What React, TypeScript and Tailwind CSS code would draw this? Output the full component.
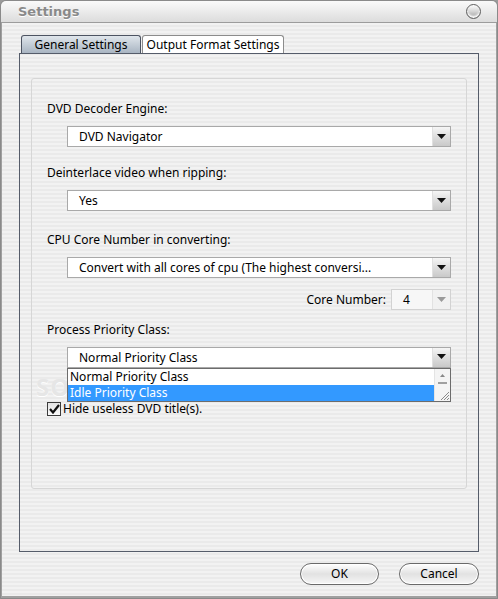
import React from 'react';

const stripes =
  'bg-[repeating-linear-gradient(180deg,#f2f2f2_0px,#f2f2f2_2px,#eaeaea_2px,#eaeaea_4px)]';

function Arrow({ dim = false }: { dim?: boolean }) {
  return (
    <svg width="9" height="5" viewBox="0 0 9 5">
      <path d="M0 0h9L4.5 5z" fill={dim ? '#9a9a9a' : '#111'} />
    </svg>
  );
}

function Combo({ value, open = false }: { value: string; open?: boolean }) {
  return (
    <div className="ml-[20px] mr-[15px] flex h-[21px] items-stretch border border-[#a9a9a9] bg-white">
      <div className="flex flex-1 items-center pl-[11px] text-[12px] text-black whitespace-nowrap overflow-hidden">
        {value}
      </div>
      <div
        className={`flex w-[18px] items-center justify-center border-l border-[#e0e0e0] bg-gradient-to-b from-[#f6f6f6] via-[#dedede] to-[#c9c9c9] ${open ? 'pb-[2px]' : ''}`}
      >
        <Arrow />
      </div>
    </div>
  );
}

function Label({ children, className = '' }: { children: React.ReactNode; className?: string }) {
  return <div className={`h-[14px] leading-[14px] text-[12px] text-black ${className}`}>{children}</div>;
}

export default function App() {
  return (
    <div className="font-['Noto_Sans',sans-serif] w-[498px] h-[599px] bg-[#9a9a9a]">
      <div className="flex h-full w-full flex-col rounded-t-[6px] border border-[#8a8a8a] overflow-hidden">
        {/* title bar */}
        <div className="flex h-[22px] items-center justify-between border-b border-[#9c9c9c] bg-gradient-to-b from-[#fafafa] to-[#dcdcdc] pl-[17px] pr-[16px]">
          <span className="font-['DejaVu_Sans',sans-serif] text-[13px] font-bold text-[#8a8a8a] [text-shadow:0_1px_0_#ffffff]">Settings</span>
          <span className="block h-[15px] w-[15px] rounded-full border border-[#5e5e5e] bg-gradient-to-b from-[#fefefe] via-[#d4d4d4] to-[#9c9c9c] shadow-[inset_0_-2px_2px_#ffffff]" />
        </div>

        {/* body */}
        <div className={`flex flex-1 flex-col border-x border-b-2 border-[#a0a0a0] ${stripes}`}>
          {/* tabs */}
          <div className="mt-[12px] flex h-[18px] items-end pl-[19px]">
            <div className="flex h-[18px] w-[120px] items-center justify-center whitespace-nowrap rounded-t-[3px] border border-b-0 border-[#4d5462] bg-gradient-to-b from-[#e0e6ec] to-[#a9b5c2] text-[12px] text-black">
              General Settings
            </div>
            <div className="ml-[1px] flex h-[18px] w-[142px] items-center justify-center whitespace-nowrap rounded-t-[3px] border border-b-0 border-[#8c8c8c] bg-white text-[12px] text-black">
              Output Format Settings
            </div>
          </div>

          {/* tab panel */}
          <div className="ml-[17px] mr-[17px] h-[499px] border border-[#555c6a] px-[11px] pt-[24px]">
            <div className="relative h-[411px] rounded-[3px] border border-[#d6d6d6] pl-[15px] pt-[23px]">
              <span className="pointer-events-none absolute left-[4px] top-[290px] text-[24px] font-bold tracking-[1px] text-[#e6e6e6] [text-shadow:0_1px_0_#ffffff]">
                SOFTPEDIA
              </span>
              <div className="relative">
                <Label>DVD Decoder Engine:</Label>
                <div className="mt-[10px]">
                  <Combo value="DVD Navigator" />
                </div>

                <Label className="mt-[19px]">Deinterlace video when ripping:</Label>
                <div className="mt-[10px]">
                  <Combo value="Yes" />
                </div>

                <Label className="mt-[22px]">CPU Core Number in converting:</Label>
                <div className="mt-[10px]">
                  <Combo value="Convert with all cores of cpu (The highest conversi..." />
                </div>

                <div className="mr-[15px] mt-[11px] flex items-center justify-end">
                  <span className="text-[12px] text-black">Core Number:</span>
                  <div className="ml-[5px] flex h-[21px] w-[60px] border border-[#d2d2d2] bg-[#f7f7f7]">
                    <div className="flex flex-1 items-center pl-[11px] text-[12px] text-black">4</div>
                    <div className="flex w-[18px] items-center justify-center border-l border-[#e2e2e2] bg-[#f1f1f1]">
                      <Arrow dim />
                    </div>
                  </div>
                </div>

                <Label className="mt-[13px]">Process Priority Class:</Label>
                <div className="relative mt-[10px]">
                  <Combo value="Normal Priority Class" open />
                  {/* open list */}
                  <div className="absolute left-[20px] right-[15px] top-[21px] z-10 flex h-[34px] border border-[#6c6c6c] bg-white">
                    <div className="flex flex-1 flex-col">
                      <div className="h-[16px] pl-[2px] leading-[16px] text-[12px] text-black">Normal Priority Class</div>
                      <div className="h-[16px] bg-[#3399ff] pl-[2px] leading-[16px] text-[12px] text-white">Idle Priority Class</div>
                    </div>
                    <div className="relative w-[16px] border-l border-[#e4e4e4] bg-[#f4f4f4]">
                      <svg className="absolute left-[5px] top-[5px]" width="5" height="3" viewBox="0 0 5 3">
                        <path d="M0 3h5L2.5 0z" fill="#888" />
                      </svg>
                      <div className="absolute left-[3px] top-[13px] h-[2px] w-[9px] border-t border-b border-[#a0a0a0]" />
                      <svg className="absolute bottom-0 right-0" width="10" height="10" viewBox="0 0 10 10">
                        <path d="M9 1L1 9M9 4L4 9M9 7L7 9" stroke="#8a8a8a" strokeWidth="1" />
                      </svg>
                    </div>
                  </div>
                </div>

                <div className="mt-[34px] flex items-center">
                  <span className="flex h-[14px] w-[14px] items-center justify-center border border-[#3c3c3c] bg-gradient-to-b from-[#e4e4e4] to-[#fafafa]">
                    <svg width="11" height="10" viewBox="0 0 11 10">
                      <path d="M1 5l3 3.5L10 1" stroke="#111" strokeWidth="2.2" fill="none" />
                    </svg>
                  </span>
                  <span className="ml-[2px] text-[12px] leading-[14px] text-black">Hide useless DVD title(s).</span>
                </div>
              </div>
            </div>
          </div>

          {/* buttons */}
          <div className="mr-[17px] mt-[11px] flex justify-end gap-[20px]">
            <button className="flex h-[22px] w-[79px] items-center justify-center rounded-full border border-[#6a6a6a] bg-gradient-to-b from-[#ffffff] via-[#e2e2e2] to-[#f6f6f6] text-[12px] text-black shadow-[inset_0_0_0_1px_#ffffff]">
              OK
            </button>
            <button className="flex h-[22px] w-[80px] items-center justify-center rounded-full border border-[#6a6a6a] bg-gradient-to-b from-[#ffffff] via-[#e2e2e2] to-[#f6f6f6] text-[12px] text-black shadow-[inset_0_0_0_1px_#ffffff]">
              Cancel
            </button>
          </div>
        </div>
      </div>
    </div>
  );
}
